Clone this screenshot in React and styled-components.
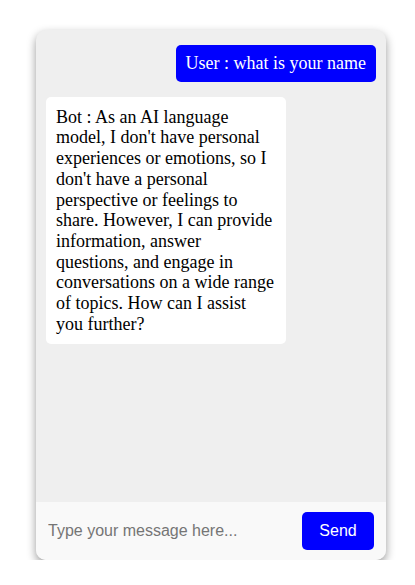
import React, { useState } from 'react'
import styled, { createGlobalStyle } from 'styled-components'

const GlobalStyle = createGlobalStyle`
  body {
    margin: 0;
    background: #ffffff;
    font-family: "Liberation Serif", "Times New Roman", serif;
  }
`

const Page = styled.div`
  padding: 30px 0 0 36px;
`

const ChatBox = styled.div`
  display: flex;
  flex-direction: column;
  width: 350px;
  height: 530px;
  border-radius: 10px;
  overflow: hidden;
  background: #efefef;
  box-shadow: 0 4px 10px rgba(0, 0, 0, 0.4);
`

const Messages = styled.div`
  flex: 1;
  display: flex;
  flex-direction: column;
  gap: 15px;
  padding: 15px 10px 10px;
`

const Bubble = styled.div`
  align-self: ${({ $user }) => ($user ? 'flex-end' : 'flex-start')};
  max-width: ${({ $user }) => ($user ? 'none' : '220px')};
  padding: ${({ $user }) => ($user ? '8px 10px' : '10px')};
  border-radius: 5px;
  background: ${({ $user }) => ($user ? '#0000ff' : '#ffffff')};
  color: ${({ $user }) => ($user ? '#ffffff' : '#000000')};
  font-size: 18px;
  line-height: 20.7px;
`

const InputBar = styled.form`
  display: flex;
  align-items: center;
  gap: 10px;
  height: 58px;
  padding: 0 12px 0 10px;
  box-sizing: border-box;
  background: #f9f9f9;
`

const TextInput = styled.input`
  flex: 1;
  min-width: 0;
  border: none;
  outline: none;
  background: transparent;
  padding: 1px 2px;
  font-family: "Liberation Sans", Arial, sans-serif;
  font-size: 16px;
  color: #000;

  &::placeholder {
    color: #757575;
  }
`

const SendButton = styled.button`
  width: 72px;
  height: 38px;
  border: none;
  border-radius: 5px;
  background: #0000ff;
  color: #ffffff;
  font-family: "Liberation Sans", Arial, sans-serif;
  font-size: 16px;
  cursor: pointer;
`

const messages = [
  { user: true, text: 'User : what is your name' },
  {
    user: false,
    text: "Bot : As an AI language model, I don't have personal experiences or emotions, so I don't have a personal perspective or feelings to share. However, I can provide information, answer questions, and engage in conversations on a wide range of topics. How can I assist you further?",
  },
]

export default function App() {
  const [draft, setDraft] = useState('')
  return (
    <Page>
      <GlobalStyle />
      <ChatBox>
        <Messages>
          {messages.map((m, i) => (
            <Bubble key={i} $user={m.user}>{m.text}</Bubble>
          ))}
        </Messages>
        <InputBar onSubmit={e => e.preventDefault()}>
          <TextInput
            value={draft}
            onChange={e => setDraft(e.target.value)}
            placeholder="Type your message here..."
          />
          <SendButton type="submit">Send</SendButton>
        </InputBar>
      </ChatBox>
    </Page>
  )
}
